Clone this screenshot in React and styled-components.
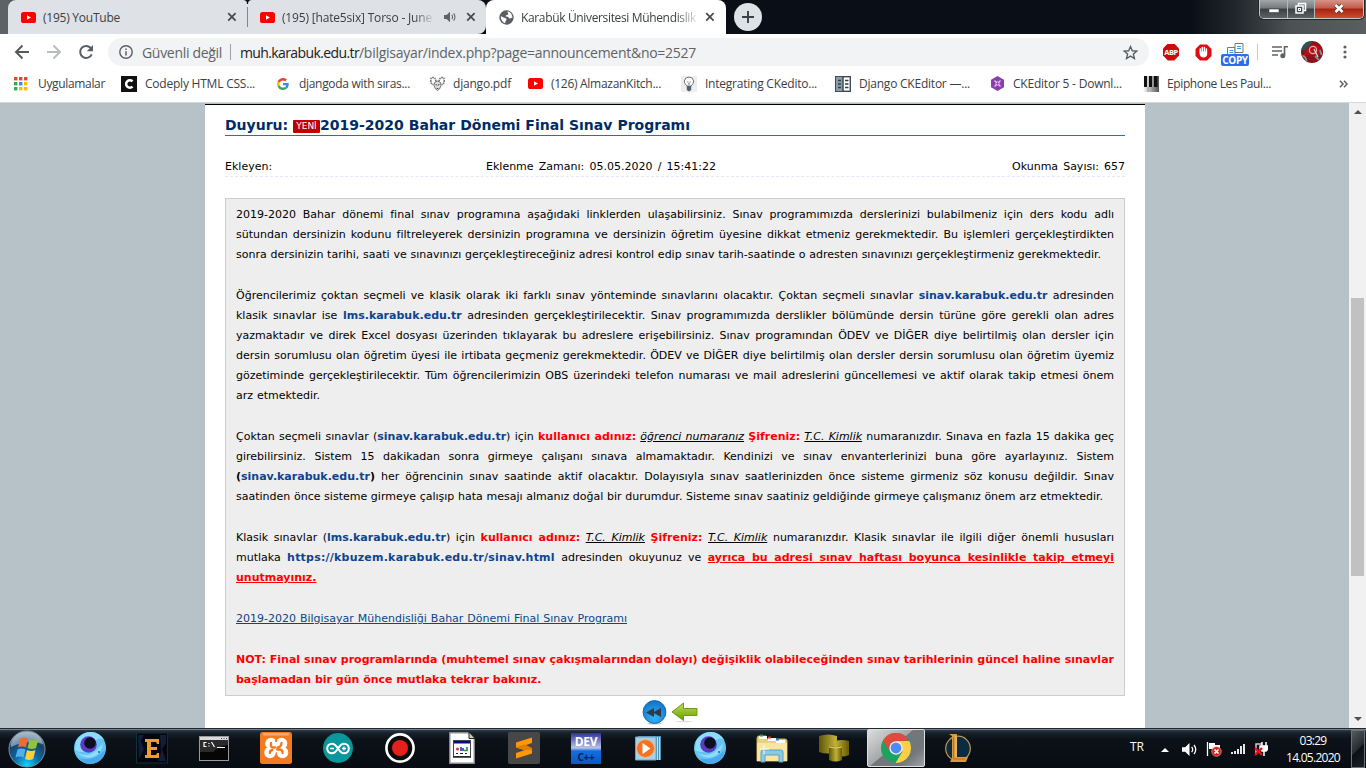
import React, { useLayoutEffect, useRef } from "react";
import styled, { createGlobalStyle, css } from "styled-components";

const GlobalStyle = createGlobalStyle`
  * { box-sizing: border-box; }
  html, body, #root { margin: 0; height: 768px; overflow: hidden; }
  svg { display: block; flex: none; }
`;

const Screen = styled.div`
  width: 1366px;
  height: 768px;
  display: flex;
  flex-direction: column;
  overflow: hidden;
  background: #fff;
  font-family: "Open Sans", "Noto Sans", sans-serif;
`;

/* ---------- text of a known width ---------- */
const FitBox = styled.span`
  display: block;
  flex: none;
  width: ${(p) => p.$w}px;
  font-size: ${(p) => p.$size || 12}px;
  color: ${(p) => p.$color || "#3c4043"};
  white-space: nowrap;
  overflow: visible;
  ${(p) =>
    p.$fade &&
    css`
      -webkit-mask-image: linear-gradient(90deg, #000 88%, rgba(0, 0, 0, 0.15));
      mask-image: linear-gradient(90deg, #000 88%, rgba(0, 0, 0, 0.15));
    `}
`;
const FitInner = styled.span`
  display: inline-block;
`;
function Fit({ w, size, color, fade, children }) {
  const ref = useRef(null);
  useLayoutEffect(() => {
    const el = ref.current;
    el.style.letterSpacing = "0px";
    const natural = el.getBoundingClientRect().width;
    el.style.letterSpacing = `${(w - natural) / el.textContent.length}px`;
  }, [w]);
  return (
    <FitBox $w={w} $size={size} $color={color} $fade={fade}>
      <FitInner ref={ref}>{children}</FitInner>
    </FitBox>
  );
}

const Gap = styled.div`
  flex: none;
  width: ${(p) => p.$w ?? 2}px;
`;

/* ---------- tab strip ---------- */
const TabStrip = styled.div`
  display: flex;
  flex: none;
  height: 34px;
  padding-left: 8px;
  background: linear-gradient(90deg, #5d6266 0, #5d6266 8px, #0a0f17 30px, #0a0f17 1190px, #20262b 1235px, #4d5153 1290px, #5a5e60 1366px);
`;
const Tab = styled.div`
  display: flex;
  align-items: center;
  width: ${(p) => p.$w}px;
  height: 34px;
  padding: 0 8px 0 ${(p) => p.$pad}px;
  background: ${(p) => (p.$active ? "#fff" : "#dee1e6")};
  border-radius: ${(p) => (p.$active ? "8px 8px 0 0" : p.$last ? "4px 8px 8px 0" : "8px 4px 0 0")};
`;
const TabIcon = styled.div`
  width: 16px;
  margin-right: 7px;
  display: flex;
  justify-content: center;
`;
const Spacer = styled.div`
  flex: 1;
`;
const TabDivider = styled.div`
  width: 1px;
  height: 34px;
  background: linear-gradient(#0a0f17 4px, #dee1e6 4px, #dee1e6 7px, #80868b 7px, #80868b 27px, #dee1e6 27px);
`;
const NewTab = styled.div`
  display: flex;
  align-items: center;
  justify-content: center;
  width: 28px;
  height: 28px;
  margin: 3px 0 0 8px;
  border-radius: 50%;
  background: #dee1e6;
`;
const WindowButtons = styled.div`
  display: flex;
  width: 105px;
  height: 19px;
  margin-right: 2px;
  border: 1px solid #c4c8ca;
  border-top: 0;
  border-radius: 0 0 5px 5px;
  overflow: hidden;
  box-shadow: 0 0 0 1px #22262a;
`;
const WinButton = styled.div`
  display: flex;
  align-items: center;
  justify-content: center;
  width: ${(p) => p.$w}px;
  padding-bottom: 2px;
  border-right: ${(p) => (p.$close ? 0 : "1px solid #b5b8ba")};
  background: ${(p) =>
    p.$close
      ? "linear-gradient(#d79386 0, #c25a48 45%, #a52410 50%, #cf4c30 100%)"
      : "linear-gradient(#a3a7a9 0, #75797b 45%, #3b3f42 50%, #5d6264 100%)"};
`;

/* ---------- toolbar ---------- */
const Toolbar = styled.div`
  display: flex;
  flex: none;
  align-items: center;
  height: 36px;
  padding-left: 14px;
`;
const NavIcon = styled.div`
  display: flex;
  justify-content: center;
  width: 16px;
  margin-right: 16px;
`;
const Omnibox = styled.div`
  display: flex;
  align-items: center;
  width: 1041px;
  height: 28px;
  margin-left: -2px;
  padding: 0 11px 0 11px;
  border-radius: 14px;
  background: #f1f3f4;
`;
const UrlDivider = styled.div`
  width: 1px;
  height: 16px;
  margin: 0 9px 0 8px;
  background: #9aa0a6;
`;
const Extensions = styled.div`
  display: flex;
  align-items: center;
  height: 36px;
  padding-left: 14px;
`;
const AbpBadge = styled.div`
  display: flex;
  align-items: center;
  justify-content: center;
  width: 16px;
  height: 17px;
  clip-path: polygon(30% 0, 70% 0, 100% 30%, 100% 70%, 70% 100%, 30% 100%, 0 70%, 0 30%);
  background: #c70d0d;
  color: #fff;
  font: bold 7.500px "Open Sans", sans-serif;
  letter-spacing: -0.4px;
`;
const CopyExt = styled.div`
  display: flex;
  flex-direction: column;
  align-items: center;
  width: 28px;
  margin: 5px 0 0 9px;
`;
const CopyBadge = styled.div`
  width: 28px;
  height: 12px;
  border-radius: 2px;
  background: #2f6bed;
  color: #fff;
  font: bold 10px/12px "Open Sans", sans-serif;
  letter-spacing: -0.4px;
  text-align: center;
`;
const ExtDivider = styled.div`
  width: 1px;
  height: 16px;
  margin: 0 14px 0 8px;
  background: #c4c7ca;
`;

/* ---------- bookmarks ---------- */
const BookmarkBar = styled.div`
  display: flex;
  flex: none;
  align-items: center;
  height: 33px;
  padding: 0 0 5px 13px;
  border-bottom: 1px solid #d5d8db;
`;
const Bookmark = styled.div`
  display: flex;
  align-items: center;
  width: ${(p) => p.$w}px;
`;
const BookmarkIcon = styled.div`
  display: flex;
  justify-content: center;
  width: 16px;
  margin-right: ${(p) => p.$gap || 8}px;
`;

/* ---------- page ---------- */
const Viewport = styled.div`
  display: flex;
  flex: 1;
  min-height: 0;
  background: #b7c2c8;
`;
const PageArea = styled.div`
  flex: 1;
  display: flex;
  justify-content: center;
  padding: 1px 0 0 1px;
`;
const Page = styled.main`
  width: 940px;
  padding: 0 20px;
  border-top: 1px solid #000;
  background: #fff;
  color: #000;
  font-family: "DejaVu Sans", Verdana, sans-serif;
  font-size: 11px;
  font-variant-ligatures: none;
`;
const Title = styled.h1`
  display: flex;
  align-items: center;
  height: 31px;
  margin: 0;
  padding-top: 10px;
  border-bottom: 1px solid #1a74c4;
  color: #002c66;
  font-size: 14px;
`;
const TitleText = styled.div`
  width: ${(p) => p.$w}px;
  text-align-last: justify;
  white-space: nowrap;
`;
const NewBadge = styled.span`
  width: 27px;
  height: 13px;
  margin: 2px 0 0 5px;
  border-radius: 1px;
  background: #c00000;
  color: #fff;
  font: 9px/13px "DejaVu Sans", sans-serif;
  text-align: center;
`;
const Meta = styled.div`
  display: flex;
  justify-content: space-between;
  height: 41px;
  padding-top: 21px;
  border-bottom: 1px dashed #e4e8f4;
  line-height: 20px;
`;
const MetaItem = styled.div`
  width: ${(p) => p.$w}px;
  margin-right: ${(p) => p.$mr || 0}px;
  text-align-last: justify;
  white-space: nowrap;
`;
const Notice = styled.article`
  height: 498px;
  margin-top: 21px;
  padding: 6px 10px 4px;
  border: 1px solid #ccc;
  background: #eee;
`;
const Paragraph = styled.div`
  margin-bottom: 21px;
  line-height: 20px;
`;
const Line = styled.div`
  width: ${(p) => p.$w || 878}px;
  height: 20px;
  text-align: justify;
  text-align-last: justify;
  white-space: nowrap;
`;
const Host = styled.b`
  color: #0d4490;
  letter-spacing: ${(p) => p.$ls || 0}px;
`;
const Red = styled.b`
  color: #f00;
`;
const RedLink = styled(Red)`
  text-decoration: underline;
`;
const Hint = styled.em`
  text-decoration: underline;
`;
const Anchor = styled.a`
  color: #0d4490;
  text-decoration: underline;
`;
const PageNav = styled.div`
  display: flex;
  align-items: center;
  gap: 4px;
  height: 32px;
  padding-left: 417px;
`;

/* ---------- scrollbar ---------- */
const Scrollbar = styled.div`
  display: flex;
  flex-direction: column;
  align-items: center;
  width: 17px;
  padding: 7px 0 7px;
  background: #f1f1f1;
`;
const Thumb = styled.div`
  width: 13px;
  height: 278px;
  margin: 184px 0 auto;
  background: #c1c1c1;
`;
const Arrow = styled.div`
  border: 4px solid transparent;
  border-width: ${(p) => (p.$down ? "4px 4px 0" : "0 4px 4px")};
  border-${(p) => (p.$down ? "top" : "bottom")}-color: ${(p) => p.$color || "#505050"};
`;

/* ---------- taskbar ---------- */
const Taskbar = styled.footer`
  display: flex;
  flex: none;
  height: 40px;
  border-top: 1px solid #20272d;
  box-shadow: inset 0 1px 0 #76818b;
  background: linear-gradient(#76818b 0, #76818b 1px, #2d3a47 1px, #17212b 4px, #0c1219 10px, #080c12 100%);
`;
const Start = styled.div`
  display: flex;
  align-items: center;
  width: 59px;
  padding-left: 7px;
`;
const Slot = styled.div`
  display: flex;
  align-items: center;
  justify-content: center;
  width: 62px;
  height: 39px;
  padding-bottom: 1px;
`;
const ActiveSlot = styled.div`
  display: flex;
  align-items: center;
  justify-content: center;
  width: 58px;
  height: 38px;
  margin: 0 2px;
  border: 1px solid #dfe2e3;
  border-radius: 2px;
  background: linear-gradient(140deg, #dcdddd 0, #a4a7a9 45%, #73777a 46%, #73777a 75%, #a0a3a5 100%);
`;
const Tray = styled.div`
  display: flex;
  align-items: center;
  flex: 1;
  padding-left: 141px;
  padding-top: 1px;
`;
const Language = styled.div`
  padding-bottom: 6px;
`;
const TrayItem = styled.div`
  display: flex;
  margin-left: ${(p) => p.$ml}px;
  padding-top: ${(p) => p.$pt || 0}px;
`;
const Clock = styled.div`
  display: flex;
  flex-direction: column;
  align-items: center;
  width: 56px;
  margin-left: 17px;
  line-height: 17px;
`;
const ShowDesktop = styled.div`
  width: 14px;
  height: 38px;
  margin-left: 10px;
  border: 1px solid #6b7278;
  background: linear-gradient(135deg, #555b60 0, #252a2f 50%, #0b0f13 51%, #1c2024 100%);
`;

/* ---------- drawings ---------- */
const YouTube = ({ w = 15 }) => (
  <svg width={w} height="11" viewBox="0 0 15 11">
    <rect width="15" height="11" rx="2.6" fill="#f00" />
    <path d="M6 3.2v4.6l4-2.3z" fill="#fff" />
  </svg>
);
const Cross = () => (
  <svg width="10" height="10" viewBox="0 0 10 10">
    <path d="M1.2 1.2l7.4 7.4M8.6 1.2L1.2 8.6" stroke="#45494d" strokeWidth="1.7" />
  </svg>
);
const Globe = () => (
  <svg width="15" height="15" viewBox="0 0 24 24">
    <circle cx="12" cy="12" r="11.5" fill="#5a5e63" />
    <path d="M14 2.500c-1 2.500 1.500 3 .5 4.500s-4 .5-4 2.500 4 .5 5 2.500 2 1.500 3 1 1.500-1 3-.5C21.500 7 18 3 14 2.500zM3 10c2 0 3.500 2 5.500 2.500s4 1 3.500 3-2 2-2 3.500v2C6 20 2.500 16 3 10z" fill="#fff" />
  </svg>
);
const Speaker = ({ color = "#5f6368", size = 12 }) => (
  <svg width={size} height={size} viewBox="0 0 14 14">
    <path d="M0 4.800h3L7 1v12L3 9.200H0z" fill={color} />
    <path d="M9 4.500q2 2.500 0 5M11.200 2.800q3.200 4.200 0 8.400" stroke={color} strokeWidth="1.200" fill="none" />
  </svg>
);
const WinGlyph = ({ kind }) => (
  <svg width="14" height="13" viewBox="0 0 14 13">
    {kind === "min" && <rect x="2" y="7" width="10" height="3.500" fill="#fff" stroke="#44484c" strokeWidth=".6" />}
    {kind === "max" && (
      <g fill="none" stroke="#fff" strokeWidth="1.500">
        <path d="M4.500 3.500V1.500h7v7h-2" />
        <rect x="2" y="4" width="7" height="7" fill="#45494d" />
        <rect x="4.500" y="6.500" width="2" height="2" strokeWidth="1" />
      </g>
    )}
    {kind === "close" && (
      <g fill="none">
        <path d="M3.500 3l7 7M10.500 3l-7 7" stroke="#4c3030" strokeWidth="4.200" />
        <path d="M3.500 3l7 7M10.500 3l-7 7" stroke="#fff" strokeWidth="2.600" />
      </g>
    )}
  </svg>
);
const ArrowIcon = ({ color, flip }) => (
  <svg width="16" height="16" viewBox="0 0 16 16">
    <path transform={flip ? "translate(16 0) scale(-1 1)" : undefined} d="M15 8H2.500M8.500 1.500L2 8l6.500 6.500" stroke={color} strokeWidth="1.900" fill="none" />
  </svg>
);
const Reload = () => (
  <svg width="16" height="16" viewBox="0 0 16 16">
    <path d="M13.700 10.300A6 6 0 1 1 12.500 3.800L14 5.300" stroke="#5a5e63" strokeWidth="2" fill="none" />
    <path d="M15 1v6.200H8.800z" fill="#5a5e63" />
  </svg>
);
const Info = () => (
  <svg width="14" height="14" viewBox="0 0 14 14">
    <circle cx="7" cy="7" r="6.200" fill="none" stroke="#5a5e63" strokeWidth="1.400" />
    <path d="M7 6.200v4.300M7 3.400v1.500" stroke="#5a5e63" strokeWidth="1.500" />
  </svg>
);
const Star = () => (
  <svg width="15" height="15" viewBox="0 0 24 24">
    <path d="M12 2.500l2.900 6.700 7.200.6-5.500 4.700 1.700 7.100L12 17.800l-6.300 3.800 1.700-7.100L1.900 9.800l7.200-.6z" fill="none" stroke="#5a5e63" strokeWidth="2.200" />
  </svg>
);
const HandBadge = () => (
  <svg width="17" height="17" viewBox="0 0 17 17">
    <path d="M5 .5h7L16.500 5v7L12 16.500H5L.5 12V5z" fill="#e30b13" />
    <path d="M5.300 8V5M7.300 8V3.600M9.400 8V3.600M11.400 8V5" stroke="#fff" strokeWidth="1.500" strokeLinecap="round" />
    <path d="M4.600 7.500h7.600v3q-.5 3-3.700 3T4.600 10z" fill="#fff" />
  </svg>
);
const CopyPages = () => (
  <svg width="17" height="11" viewBox="0 0 17 11">
    <path d="M.5 11V4.500h7.500V11" fill="#fff" stroke="#777" />
    <path d="M8 9.500V.5h8v9z" fill="#fff" stroke="#777" />
    <path d="M2.500 7.500h4M2.500 9.500h4M10 3.500h4M10 5.500h4" stroke="#3d97ea" />
  </svg>
);
const Playlist = () => (
  <svg width="16" height="14" viewBox="0 0 16 14">
    <path d="M0 2h10M0 6h10M0 10h6" stroke="#5f6368" strokeWidth="1.700" />
    <path d="M12.500 10.500V1.700H16" stroke="#5f6368" strokeWidth="1.600" fill="none" />
    <circle cx="10.800" cy="10.800" r="2.500" fill="#5f6368" />
  </svg>
);
const Avatar = () => (
  <svg width="22" height="22" viewBox="0 0 22 22">
    <circle cx="11" cy="11" r="11" fill="#8d1119" />
    <path d="M.5 8A11 11 0 0 1 8 .5l4 .5-4 4-5 5z" fill="#28555c" />
    <path d="M3 14L7 6l6-3 6 3 2 6-5 2z" fill="#b50f18" />
    <path d="M1.500 15q3 0 4 5M14 15l4 4M19 9l1.500 5" stroke="#7d9197" strokeWidth="1.800" fill="none" />
    <circle cx="12" cy="9" r="3.600" fill="none" stroke="#e7a9a5" strokeWidth="1.300" />
    <path d="M13 8l4 8" stroke="#dbe0e0" strokeWidth="1.300" />
  </svg>
);
const Dots = () => (
  <svg width="4" height="14" viewBox="0 0 4 14">
    {[2, 7, 12].map((y) => (
      <circle key={y} cx="2" cy={y} r="1.600" fill="#5f6368" />
    ))}
  </svg>
);
const AppsIcon = () => (
  <svg width="14" height="14" viewBox="0 0 14 14">
    {["#ea4335", "#ea4335", "#ea4335", "#34a853", "#4285f4", "#fbbc04", "#34a853", "#fbbc04", "#fbbc04"].map((c, i) => (
      <rect key={i} x={(i % 3) * 5} y={Math.floor(i / 3) * 5} width="3.400" height="3.400" fill={c} />
    ))}
  </svg>
);
const CodeplyIcon = () => (
  <svg width="16" height="16" viewBox="0 0 16 16">
    <rect width="16" height="16" fill="#111" />
    <path d="M11.500 5.400A3.700 3.700 0 1 0 11.500 10.600" fill="none" stroke="#fff" strokeWidth="2.500" />
  </svg>
);
const GoogleIcon = () => (
  <svg width="12" height="12" viewBox="0 0 48 48">
    <path fill="#EA4335" d="M24 9.500c3.540 0 6.710 1.220 9.210 3.600l6.850-6.850C35.900 2.380 30.470 0 24 0 14.620 0 6.510 5.380 2.560 13.220l7.980 6.190C12.430 13.720 17.740 9.500 24 9.500z" />
    <path fill="#4285F4" d="M46.980 24.550c0-1.570-.15-3.090-.38-4.550H24v9.020h12.940c-.58 2.960-2.260 5.480-4.780 7.180l7.730 6c4.510-4.180 7.090-10.360 7.090-17.650z" />
    <path fill="#FBBC05" d="M10.530 28.590c-.48-1.450-.76-2.990-.76-4.590s.27-3.140.76-4.590l-7.980-6.190C.92 16.460 0 20.120 0 24c0 3.880.92 7.540 2.560 10.780l7.970-6.190z" />
    <path fill="#34A853" d="M24 48c6.480 0 11.930-2.130 15.890-5.810l-7.730-6c-2.150 1.450-4.920 2.300-8.160 2.300-6.260 0-11.570-4.220-13.470-9.910l-7.980 6.190C6.510 42.620 14.620 48 24 48z" />
  </svg>
);
const GoatIcon = () => (
  <svg width="15" height="16" viewBox="0 0 15 16">
    <path d="M6 5.500Q5.500 1.500 3 1.500T.8 5 3.500 8.500M9 5.500q.5-4 3-4T14.200 5t-2.700 3.500" fill="none" stroke="#777" strokeWidth="1.700" strokeDasharray="1.600 .7" />
    <path d="M4.500 6.500l3-1.500 3 1.500.5 3-1.500 3.500-2 1.500-2-1.500L4 9.500z" fill="#ddd" stroke="#666" strokeWidth=".9" />
    <path d="M5.800 8l1 1.500M9.200 8l-1 1.500M6.800 12.500h1.500" stroke="#333" strokeWidth="1" />
  </svg>
);
const BulbIcon = () => (
  <svg width="16" height="16" viewBox="0 0 16 16">
    <rect width="16" height="16" fill="#eee" />
    <path d="M5.800 10Q3 7 3.300 5 4 1 8 1t4.700 4q.3 2-2.500 5z" fill="#fff" stroke="#777" />
    <path d="M5.800 10h4.400v4L8 15.500 5.800 14z" fill="#53616a" />
    <path d="M6.500 5L8 9l1.500-4" stroke="#aaa" fill="none" />
  </svg>
);
const PackageIcon = () => (
  <svg width="16" height="16" viewBox="0 0 16 16">
    <rect x=".7" y=".7" width="14.600" height="14.600" fill="#fff" stroke="#3c4b55" strokeWidth="1.400" />
    <path d="M1 1h7v14H1z" fill="#8b9cab" />
    <path d="M8 1v14" stroke="#3c4b55" strokeWidth="1.500" />
    <path d="M3 4.500h3M3 8h3M3 11.500h3M10 4.500h3.500M10 8h3.500M10 11.500h3.500" stroke="#32404a" strokeWidth="1.700" />
  </svg>
);
const CkIcon = () => (
  <svg width="15" height="15" viewBox="0 0 15 15">
    <path d="M7.500 0L14 3.700v7.600L7.500 15 1 11.300V3.700z" fill="#8b3fae" />
    <path d="M4.500 4.500l6 6M10.500 4.500l-6 6" stroke="#e4c8ee" strokeWidth="1.300" />
    <circle cx="7.500" cy="7.500" r="1.600" fill="#8b3fae" stroke="#e4c8ee" />
  </svg>
);
const PianoIcon = () => (
  <svg width="16" height="16" viewBox="0 0 16 16">
    <defs>
      <linearGradient id="keys" x1="0" x2="1">
        <stop offset="0" stopColor="#fff" />
        <stop offset="1" stopColor="#555" />
      </linearGradient>
    </defs>
    <rect width="16" height="16" fill="url(#keys)" />
    <path d="M1 0h3v11H1zM6 0h3v11H6zM11 0h3.500v11H11z" fill="#111" />
    <path d="M5 11v5M10 11v5" stroke="#888" strokeWidth=".7" />
  </svg>
);
const Rewind = () => (
  <svg width="25" height="25" viewBox="0 0 25 25">
    <defs>
      <radialGradient id="rew" cx=".5" cy=".75" r=".7">
        <stop offset="0" stopColor="#35b2f4" />
        <stop offset="1" stopColor="#1177cd" />
      </radialGradient>
    </defs>
    <ellipse cx="12.500" cy="23.500" rx="7" ry="1" fill="#bbc8d4" />
    <circle cx="12.500" cy="12" r="11.400" fill="url(#rew)" stroke="#1467a9" />
    <path d="M12 8v9l-8-4.500zM19 8v9l-8-4.500z" fill="#2f3c47" />
  </svg>
);
const GreenArrow = () => (
  <svg width="27" height="21" viewBox="0 0 27 21">
    <defs>
      <linearGradient id="grn" x2="0" y2="1">
        <stop offset="0" stopColor="#c8df55" />
        <stop offset="1" stopColor="#5f9e00" />
      </linearGradient>
    </defs>
    <ellipse cx="13" cy="19.500" rx="9" ry=".8" fill="#ddd" />
    <path d="M1 10L12.500 1v5.500H26v7H12.500V18.500z" fill="url(#grn)" stroke="#6b9a1c" />
  </svg>
);
const StartOrb = () => (
  <svg width="40" height="38" viewBox="0 0 40 38">
    <defs>
      <radialGradient id="orb" cx=".5" cy=".95" r=".9">
        <stop offset="0" stopColor="#12d4ff" />
        <stop offset=".4" stopColor="#0a6aa6" />
        <stop offset=".75" stopColor="#174368" />
        <stop offset="1" stopColor="#8ba4b6" />
      </radialGradient>
    </defs>
    <circle cx="20" cy="19" r="18" fill="url(#orb)" stroke="#7f8f9b" />
    <path d="M4 14Q7 2 20 2t16 12q-15-5-32 3z" fill="#b9cad6" opacity=".6" />
    <path d="M13 8.500q4-2 8 0l-2 9q-4-2-8 0z" fill="#ee6b31" />
    <path d="M22.500 9.500q4 2 9-.5l-2.500 9q-4 2-8.500 0z" fill="#90c43b" />
    <path d="M10.500 19.500q4-2 8 0l-2 8q-4-2-8 0z" fill="#56aee8" />
    <path d="M20 20q4 2 8.500 0l-2.300 9q-4 2-8.200 0z" fill="#fbce3a" />
  </svg>
);
const Whale = () => (
  <svg width="32" height="32" viewBox="0 0 32 32">
    <circle cx="16" cy="16" r="16" fill="#62c4f3" />
    <path d="M2 9Q8 0 17 0q9 0 14 9-7-6-11 3-9 12-19 6z" fill="#8ddcfa" />
    <circle cx="14.500" cy="12.500" r="8.300" fill="#5a3cc4" />
    <circle cx="16" cy="11" r="5.800" fill="#0c0f1e" />
    <path d="M1 19q8 6 16 3 6-3 12-11-1 11-10 14T1 19z" fill="#8fdbf9" />
    <path d="M5 26q14 4 26-8-1 13-15 14-6 0-11-6z" fill="#48a9ec" />
    <circle cx="25" cy="20" r="1" fill="#1c64ae" />
  </svg>
);
const EIcon = () => (
  <svg width="32" height="32" viewBox="0 0 32 32">
    <rect x=".5" y="1" width="31" height="30" fill="#04060c" stroke="#0d3138" />
    <path d="M2 3h6l-3 6 3 8-5 10zM24 3h6v8l-4 6 4 12h-8l3-9z" fill="#121d3c" />
    <path d="M9 7h14v5h-2l-1-2h-5v5h6v3h-6v5h5l1-2h2v5H9v-3h2V10H9z" fill="#f59a32" />
  </svg>
);
const Cmd = () => (
  <svg width="30" height="25" viewBox="0 0 30 25">
    <rect x=".5" y=".5" width="29" height="24" fill="#060606" stroke="#9a9a9a" />
    <path d="M1 1h28v3H1z" fill="#d8dae0" />
    <path d="M14 4h15v5q-10 1-15 7H1V4z" fill="#333" opacity=".8" />
    <path d="M7.500 6.500H5v4h2.500M10 7v1M10 9.500v1M12.500 6l3 5M18 11.500h8" stroke="#fff" fill="none" strokeWidth="1.200" />
    <path d="M22 2.500h1M24.500 2.500h1M27 2.500h1" stroke="#446" />
  </svg>
);
const Xampp = () => (
  <svg width="32" height="32" viewBox="0 0 32 32">
    <rect width="32" height="32" rx="2.500" fill="#f47a20" />
    <rect x="3" y="1" width="26" height="2.500" rx="1" fill="#f7a878" />
    <g fill="#fff">
      <circle cx="11" cy="11.500" r="5.800" />
      <circle cx="21.500" cy="11.500" r="5.800" />
      <circle cx="10" cy="20.500" r="5.800" />
      <circle cx="22.500" cy="20.500" r="5.800" />
      <path d="M10 12h13v8H10z" />
    </g>
    <path d="M11 11v2.500q0 2 2.500 2h1.500M9.800 21q0-2.500 2.500-3M21.500 11q0 4-4 4.500M22.700 21q0-3.500-3.500-3.500h-2" fill="none" stroke="#f47a20" strokeWidth="2.300" strokeLinecap="round" />
    <path d="M16.200 5v5M16.200 22.500V27" stroke="#f47a20" strokeWidth="2" />
  </svg>
);
const Arduino = () => (
  <svg width="30" height="30" viewBox="0 0 30 30">
    <circle cx="15" cy="15" r="15" fill="#07979c" />
    <path d="M15 15.500c-2.500-4-4-4.800-6-4.800a4.800 4.800 0 0 0 0 9.600c2 0 3.500-.8 6-4.800s4-4.800 6-4.800a4.800 4.800 0 0 1 0 9.600c-2 0-3.500-.8-6-4.800z" fill="none" stroke="#fff" strokeWidth="2.100" />
    <path d="M7 15.500h4M19 15.500h4M21 13.500v4" stroke="#fff" strokeWidth="1.300" />
  </svg>
);
const Recorder = () => (
  <svg width="30" height="30" viewBox="0 0 30 30">
    <circle cx="15" cy="15" r="13.600" fill="#0a0a0a" stroke="#fff" strokeWidth="2.600" />
    <circle cx="15" cy="15" r="8" fill="#e5201d" />
  </svg>
);
const DocIcon = () => (
  <svg width="26" height="32" viewBox="0 0 26 32">
    <path d="M.8.800h19L25.200 6.500V31.200H.8z" fill="#fff" stroke="#8d8d8d" strokeWidth="1.400" />
    <path d="M20 0v6.500h6z" fill="#ccc" stroke="#222" />
    <rect x="4.500" y="8.500" width="17" height="16" fill="#fff" stroke="#444" />
    <path d="M5 9h16v2.500H5z" fill="#00107e" />
    <path d="M4 25h18" stroke="#222" strokeWidth="1.500" />
    <circle cx="8.500" cy="17" r="1.500" fill="#e2303a" />
    <path d="M12 15v4M14 16v3" stroke="#1724b9" strokeWidth="1.500" />
    <path d="M15 18.500h3V15" stroke="#2a983a" strokeWidth="1.700" fill="none" />
    <path d="M7 21.500h2M11 21.500h3M16 21.500h2" stroke="#222" />
  </svg>
);
const Sublime = () => (
  <svg width="32" height="32" viewBox="0 0 32 32">
    <rect width="32" height="32" rx="2" fill="#474747" />
    <path d="M8 10.500L24 5.500v5.500l-8.500 3 8.500 3V21.500L8 26.500V21l8.500-2.800L8 15.500z" fill="#ff9800" />
    <path d="M8 15l8.500-2.700L24 16v2l-7.500.2z" fill="#e37d00" />
  </svg>
);
const DevBox = styled.div`
  display: flex;
  flex-direction: column;
  align-items: center;
  width: 30px;
  height: 31px;
  overflow: hidden;
  background: linear-gradient(#2f3397 0, #bcc3e9 48%, #0f6fe0 58%, #0d57c4 100%);
`;
const DevText = styled.span`
  height: ${(p) => p.$h}px;
  color: ${(p) => p.$color};
  font: bold ${(p) => p.$size}px/${(p) => p.$h}px "Open Sans", sans-serif;
  letter-spacing: -0.3px;
`;
const DevCpp = () => (
  <DevBox>
    <DevText $h={17} $size={12} $color="#fff">DEV</DevText>
    <DevText $h={14} $size={10} $color="#082050">C++</DevText>
  </DevBox>
);
const Player = () => (
  <svg width="28" height="28" viewBox="0 0 28 28">
    <path d="M4 2h23v24H4z" fill="#4f93b6" />
    <path d="M1.500 3H22v23H1.500z" fill="#a5d2e7" stroke="#6aa4c3" />
    <path d="M23.500 3v23M25.500 3v23" stroke="#b8e0ef" />
    <circle cx="11.500" cy="14.500" r="9" fill="#f37320" stroke="#f9b489" />
    <path d="M8.500 9v11l8-5.500z" fill="#fff" />
  </svg>
);
const Folder = () => (
  <svg width="32" height="30" viewBox="0 0 32 30">
    <path d="M2 3h8l1 3h18q2 0 2 2v20H1V5z" fill="#e9d27c" stroke="#c7a954" />
    <path d="M3 3h8v3H3zM12 5h8v3h-8zM20 7h9v3h-9z" fill="#fff" />
    <path d="M4 2.500h3" stroke="#24a23d" strokeWidth="2" />
    <path d="M12 4.500h3" stroke="#d8362b" strokeWidth="2" />
    <path d="M20 6.500h3" stroke="#2779db" strokeWidth="2" />
    <path d="M1 10h30v18H1z" fill="#f8e5a0" />
    <path d="M5 29V19q0-2 2-2h18q2 0 2 2v10h-4v-7H9v7z" fill="#8cc9e4" stroke="#5aa0c4" />
    <path d="M8 12v9M4 16h9" stroke="#fff" opacity=".9" />
  </svg>
);
const Cylinders = () => (
  <svg width="30" height="28" viewBox="0 0 30 28">
    <defs>
      <linearGradient id="cyl" x1="0" x2="1">
        <stop offset="0" stopColor="#5f5508" />
        <stop offset=".55" stopColor="#c0b03a" />
        <stop offset="1" stopColor="#695a00" />
      </linearGradient>
    </defs>
    <path d="M0 2q9-3 18 0v16q-9 3-18 0zM16 7q7-2 14 0v14q-7 3-14 0z" fill="url(#cyl)" />
    <path d="M10 13q6.500-2 13 0v13q-6.500 3-13 0z" fill="url(#cyl)" />
    <path d="M10 13q6.500 2 13 0" stroke="#e2d355" fill="none" />
  </svg>
);
const Chrome = () => (
  <svg width="30" height="30" viewBox="0 0 30 30">
    <circle cx="15" cy="15" r="15" fill="#1da261" />
    <path d="M2 7.500A15 15 0 0 1 28 7.500L15 8.200 9 18.500z" fill="#de4b3d" />
    <path d="M15 8h13.300A15 15 0 0 1 14.500 30L21.500 18.500z" fill="#ffcd46" />
    <circle cx="15" cy="15" r="6.700" fill="#f2f2f2" />
    <circle cx="15" cy="15" r="5.400" fill="#4c8bf5" />
  </svg>
);
const League = () => (
  <svg width="28" height="30" viewBox="0 0 28 30">
    <circle cx="14" cy="15.500" r="12.300" fill="#0b2c40" stroke="#c09a4a" strokeWidth="1.200" />
    <path d="M5 1h8v23h11l-2 5H6l2-4V3z" fill="#d79a41" />
    <path d="M12 3v21" stroke="#f2cd81" />
    <path d="M9.500 4v22h12" stroke="#b47524" fill="none" />
  </svg>
);
const Flag = () => (
  <svg width="16" height="16" viewBox="0 0 16 16">
    <path d="M1.500 1v14" stroke="#fff" strokeWidth="1.300" />
    <path d="M3 2h6v2h5v6H8V8H3z" fill="#fff" />
    <circle cx="10.500" cy="10.500" r="4.800" fill="#d4231b" stroke="#efb2ac" strokeWidth=".6" />
    <path d="M8.500 8.500l4 4M12.500 8.500l-4 4" stroke="#fff" strokeWidth="1.700" />
  </svg>
);
const Signal = () => (
  <svg width="14" height="12" viewBox="0 0 14 12">
    <path d="M1 9v2M4 8v3M7 6v5M10 3v8M13 1v10" stroke="#fff" strokeWidth="1.800" />
  </svg>
);
const Power = () => (
  <svg width="14" height="16" viewBox="0 0 14 16">
    <path d="M2 14V3h6" stroke="#ccc" fill="none" strokeWidth="1.500" />
    <path d="M8 1v4M12 1v4M6 5h8v3l-2 2H8L6 8zM10 10v5" stroke="#fff" fill="#fff" strokeWidth="1.500" />
    <path d="M1 7l7 7M8 7l-7 7" stroke="#e31414" strokeWidth="2.400" />
  </svg>
);

const bookmarks = [
  { label: "Uygulamalar", slot: 108, w: 67, icon: AppsIcon, gap: 9 },
  { label: "Codeply HTML CSS...", slot: 154, w: 110, icon: CodeplyIcon },
  { label: "djangoda with sıras...", slot: 154, w: 111, icon: GoogleIcon },
  { label: "django.pdf", slot: 98, w: 58, icon: GoatIcon },
  { label: "(126) AlmazanKitch...", slot: 154, w: 110, icon: YouTube },
  { label: "Integrating CKedito...", slot: 154, w: 112, icon: BulbIcon },
  { label: "Django CKEditor —...", slot: 154, w: 111, icon: PackageIcon },
  { label: "CKEditor 5 - Downl...", slot: 154, w: 109, icon: CkIcon },
  { label: "Epiphone Les Paul...", slot: 196, w: 104, icon: PianoIcon },
];

const Browser = () => (
  <>
    <TabStrip>
      <Tab $w={239} $pad={12}>
        <TabIcon><YouTube /></TabIcon>
        <Fit w={77}>(195) YouTube</Fit>
        <Spacer />
        <Cross />
        <Gap />
      </Tab>
      <TabDivider />
      <Tab $w={238} $pad={11} $last>
        <TabIcon><YouTube /></TabIcon>
        <Fit w={150} fade>(195) [hate5six] Torso - June</Fit>
        <Spacer />
        <Speaker />
        <Gap $w={10} />
        <Cross />
        <Gap />
      </Tab>
      <Tab $w={240} $pad={12} $active>
        <TabIcon><Globe /></TabIcon>
        <Fit w={175} fade>Karabük Üniversitesi Mühendislik</Fit>
        <Spacer />
        <Cross />
        <Gap $w={3} />
      </Tab>
      <NewTab>
        <svg width="12" height="12" viewBox="0 0 12 12">
          <path d="M6 0v12M0 6h12" stroke="#3c4043" strokeWidth="1.900" />
        </svg>
      </NewTab>
      <Spacer />
      <WindowButtons>
        <WinButton $w={28}><WinGlyph kind="min" /></WinButton>
        <WinButton $w={27}><WinGlyph kind="max" /></WinButton>
        <WinButton $w={48} $close><WinGlyph kind="close" /></WinButton>
      </WindowButtons>
    </TabStrip>
    <Toolbar>
      <NavIcon><ArrowIcon color="#55595d" /></NavIcon>
      <NavIcon><ArrowIcon color="#b9bcbf" flip /></NavIcon>
      <NavIcon><Reload /></NavIcon>
      <Omnibox>
        <Info />
        <Gap $w={9} />
        <Fit w={80} size={14} color="#5f6368">Güvenli değil</Fit>
        <UrlDivider />
        <Fit w={119} size={14} color="#202124">muh.karabuk.edu.tr</Fit>
        <Fit w={337} size={14} color="#5f6368">/bilgisayar/index.php?page=announcement&amp;no=2527</Fit>
        <Spacer />
        <Star />
      </Omnibox>
      <Extensions>
        <AbpBadge>ABP</AbpBadge>
        <Gap $w={16} />
        <HandBadge />
        <CopyExt>
          <CopyPages />
          <CopyBadge>COPY</CopyBadge>
        </CopyExt>
        <ExtDivider />
        <Playlist />
        <Gap $w={13} />
        <Avatar />
        <Gap $w={20} />
        <Dots />
      </Extensions>
    </Toolbar>
    <BookmarkBar>
      {bookmarks.map((b) => (
        <Bookmark key={b.label} $w={b.slot}>
          <BookmarkIcon $gap={b.gap}><b.icon /></BookmarkIcon>
          <Fit w={b.w}>{b.label}</Fit>
        </Bookmark>
      ))}
      <svg width="9" height="8" viewBox="0 0 9 8">
        <path d="M1 .8L4 4 1 7.200M5 .8L8 4 5 7.200" stroke="#5f6368" strokeWidth="1.500" fill="none" />
      </svg>
    </BookmarkBar>
  </>
);

const Announcement = () => (
  <Page>
    <Title>
      <TitleText $w={63}>Duyuru:</TitleText>
      <NewBadge>YENİ</NewBadge>
      <TitleText $w={370}>2019-2020 Bahar Dönemi Final Sınav Programı</TitleText>
    </Title>
    <Meta>
      <MetaItem $w={47}>Ekleyen:</MetaItem>
      <MetaItem $w={230} $mr={82}>Eklenme Zamanı: 05.05.2020 / 15:41:22</MetaItem>
      <MetaItem $w={113}>Okunma Sayısı: 657</MetaItem>
    </Meta>
    <Notice>
      <Paragraph>
        <Line>2019-2020 Bahar dönemi final sınav programına aşağıdaki linklerden ulaşabilirsiniz. Sınav programımızda derslerinizi bulabilmeniz için ders kodu adlı</Line>
        <Line>sütundan dersinizin kodunu filtreleyerek dersinizin programına ve dersinizin öğretim üyesine dikkat etmeniz gerekmektedir. Bu işlemleri gerçekleştirdikten</Line>
        <Line $w={865}>sonra dersinizin tarihi, saati ve sınavınızı gerçekleştireceğiniz adresi kontrol edip sınav tarih-saatinde o adresten sınavınızı gerçekleştirmeniz gerekmektedir.</Line>
      </Paragraph>
      <Paragraph>
        <Line>Öğrencilerimiz çoktan seçmeli ve klasik olarak iki farklı sınav yönteminde sınavlarını olacaktır. Çoktan seçmeli sınavlar <Host>sinav.karabuk.edu.tr</Host> adresinden</Line>
        <Line>klasik sınavlar ise <Host>lms.karabuk.edu.tr</Host> adresinden gerçekleştirilecektir. Sınav programımızda derslikler bölümünde dersin türüne göre gerekli olan adres</Line>
        <Line>yazmaktadır ve direk Excel dosyası üzerinden tıklayarak bu adreslere erişebilirsiniz. Sınav programından ÖDEV ve DİĞER diye belirtilmiş olan dersler için</Line>
        <Line>dersin sorumlusu olan öğretim üyesi ile irtibata geçmeniz gerekmektedir. ÖDEV ve DİĞER diye belirtilmiş olan dersler dersin sorumlusu olan öğretim üyemiz</Line>
        <Line>gözetiminde gerçekleştirilecektir. Tüm öğrencilerimizin OBS üzerindeki telefon numarası ve mail adreslerini güncellemesi ve aktif olarak takip etmesi önem</Line>
        <Line $w={84}>arz etmektedir.</Line>
      </Paragraph>
      <Paragraph>
        <Line>Çoktan seçmeli sınavlar (<Host>sinav.karabuk.edu.tr</Host>) için <Red>kullanıcı adınız:</Red> <Hint>öğrenci numaranız</Hint> <Red>Şifreniz:</Red> <Hint>T.C. Kimlik</Hint> numaranızdır. Sınava en fazla 15 dakika geç</Line>
        <Line>girebilirsiniz. Sistem 15 dakikadan sonra girmeye çalışanı sınava almamaktadır. Kendinizi ve sınav envanterlerinizi buna göre ayarlayınız. Sistem</Line>
        <Line><b>(</b><Host>sinav.karabuk.edu.tr</Host><b>)</b> her öğrencinin sınav saatinde aktif olacaktır. Dolayısıyla sınav saatlerinizden önce sisteme girmeniz söz konusu değildir. Sınav</Line>
        <Line $w={867}>saatinden önce sisteme girmeye çalışıp hata mesajı almanız doğal bir durumdur. Sisteme sınav saatiniz geldiğinde girmeye çalışmanız önem arz etmektedir.</Line>
      </Paragraph>
      <Paragraph>
        <Line>Klasik sınavlar (<Host>lms.karabuk.edu.tr</Host>) için <Red>kullanıcı adınız:</Red> <Hint>T.C. Kimlik</Hint> <Red>Şifreniz:</Red> <Hint>T.C. Kimlik</Hint> numaranızdır. Klasik sınavlar ile ilgili diğer önemli hususları</Line>
        <Line>mutlaka <Host $ls={0.22}>https://kbuzem.karabuk.edu.tr/sinav.html</Host> adresinden okuyunuz ve <RedLink>ayrıca bu adresi sınav haftası boyunca kesinlikle takip etmeyi</RedLink></Line>
        <Line $w={80}><RedLink>unutmayınız.</RedLink></Line>
      </Paragraph>
      <Paragraph>
        <Line $w={391}><Anchor>2019-2020 Bilgisayar Mühendisliği Bahar Dönemi Final Sınav Programı</Anchor></Line>
      </Paragraph>
      <Paragraph>
        <Line><Red>NOT: Final sınav programlarında (muhtemel sınav çakışmalarından dolayı) değişiklik olabileceğinden sınav tarihlerinin güncel haline sınavlar</Red></Line>
        <Line $w={303}><Red>başlamadan bir gün önce mutlaka tekrar bakınız.</Red></Line>
      </Paragraph>
    </Notice>
    <PageNav>
      <Rewind />
      <GreenArrow />
    </PageNav>
  </Page>
);

const apps = [Whale, EIcon, Cmd, Xampp, Arduino, Recorder, DocIcon, Sublime, DevCpp, Player, Whale, Folder, Cylinders];

export default function App() {
  return (
    <Screen>
      <GlobalStyle />
      <Browser />
      <Viewport>
        <PageArea>
          <Announcement />
        </PageArea>
        <Scrollbar>
          <Arrow />
          <Thumb />
          <Arrow $down />
        </Scrollbar>
      </Viewport>
      <Taskbar>
        <Start><StartOrb /></Start>
        {apps.map((Icon, i) => (
          <Slot key={i}><Icon /></Slot>
        ))}
        <ActiveSlot><Chrome /></ActiveSlot>
        <Slot><League /></Slot>
        <Tray>
          <Language><Fit w={14} color="#fff">TR</Fit></Language>
          <TrayItem $ml={17} $pt={2}><Arrow $color="#fff" /></TrayItem>
          <TrayItem $ml={13}><Speaker color="#fff" size={15} /></TrayItem>
          <TrayItem $ml={9}><Flag /></TrayItem>
          <TrayItem $ml={9}><Signal /></TrayItem>
          <TrayItem $ml={9}><Power /></TrayItem>
          <Clock>
            <Fit w={27} color="#fff">03:29</Fit>
            <Fit w={54} color="#fff">14.05.2020</Fit>
          </Clock>
          <ShowDesktop />
        </Tray>
      </Taskbar>
    </Screen>
  );
}
